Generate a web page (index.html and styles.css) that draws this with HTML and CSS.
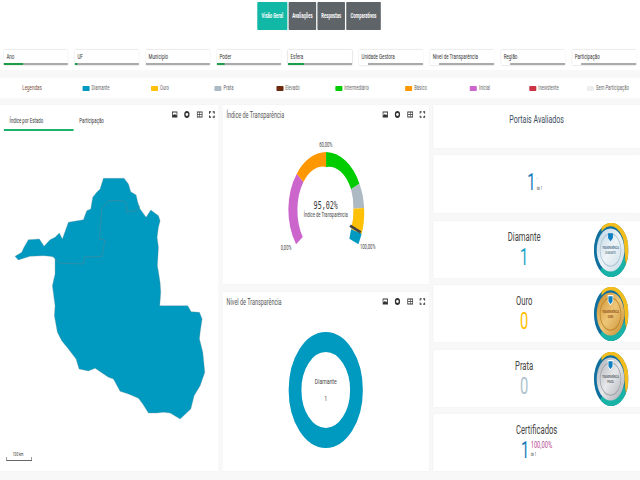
FILE: index.html
```html
<!DOCTYPE html>
<html lang="pt-BR">
<head>
<meta charset="utf-8">
<title>Visão Geral</title>
<link rel="stylesheet" href="styles.css">
</head>
<body>
<svg class="defs" width="0" height="0" aria-hidden="true">
  <defs>
    <linearGradient id="g-dia" x1="0" y1="0" x2="1" y2="1"><stop offset="0" stop-color="#b9d3e3"/><stop offset=".5" stop-color="#eef4f7"/><stop offset="1" stop-color="#c4d8e4"/></linearGradient>
    <linearGradient id="g-gold" x1="0" y1="0" x2="1" y2="1"><stop offset="0" stop-color="#c98a2a"/><stop offset=".5" stop-color="#eec678"/><stop offset="1" stop-color="#c58a30"/></linearGradient>
    <linearGradient id="g-silver" x1="0" y1="0" x2="1" y2="1"><stop offset="0" stop-color="#a9adb3"/><stop offset=".5" stop-color="#e6e8ea"/><stop offset="1" stop-color="#a5a9af"/></linearGradient>
  </defs>
  <symbol id="i-img" viewBox="0 0 24 24" preserveAspectRatio="none"><path d="M2 2h20v20H2z M5 5v10l5-5 3 3 2-2 4 4V5z" fill="#333" fill-rule="evenodd"/></symbol>
  <symbol id="i-gear" viewBox="0 0 24 24" preserveAspectRatio="none"><path d="M12 0c7 0 10 5 10 12s-3 12-10 12S2 19 2 12 5 0 12 0z M12 7a5 5 0 1 0 0 10 5 5 0 0 0 0-10z" fill="#333" fill-rule="evenodd"/></symbol>
  <symbol id="i-table" viewBox="0 0 24 24" preserveAspectRatio="none"><path d="M1 2h22v20H1z M4 5v5.500h7V5z M13 5v5.500h7V5z M4 13v6h7v-6z M13 13v6h7v-6z" fill="#333" fill-rule="evenodd"/></symbol>
  <symbol id="i-full" viewBox="0 0 24 24" preserveAspectRatio="none"><path d="M3 9V3h6 M15 3h6v6 M21 15v6h-6 M9 21H3v-6" fill="none" stroke="#333" stroke-width="3.500"/></symbol>
  <symbol id="medal-ring" viewBox="0 0 100 100">
    <circle cx="50" cy="50" r="50" fill="#0f6f9e"/>
    <path d="M22 8A50 50 0 0 1 100 50A50 50 0 0 1 92 78L88 50A40 40 0 0 0 22 16z" fill="#f2bd1d"/>
    <path d="M92 78A50 50 0 0 1 18 88L26 80A40 40 0 0 0 88 60z" fill="#19b2a6"/>
  </symbol>
</svg>
<div class="stage">
<div class="page">
  <nav class="nav">
    <a class="btn active">Visão Geral</a>
    <a class="btn">Avaliações</a>
    <a class="btn">Respostas</a>
    <a class="btn">Comparativos</a>
  </nav>

  <section class="filters">
    <div class="filter"><span>Ano</span><i class="bar"><b class="b30"></b></i></div>
    <div class="filter"><span>UF</span><i class="bar"><b class="b4"></b></i></div>
    <div class="filter"><span>Município</span><i class="bar"></i></div>
    <div class="filter"><span>Poder</span><i class="bar"><b class="b12"></b></i></div>
    <div class="filter"><span>Esfera</span><i class="bar"><b class="b25"></b></i></div>
    <div class="filter"><span>Unidade Gestora</span><i class="bar inset"></i></div>
    <div class="filter"><span>Nível de Transparência</span><i class="bar inset"></i></div>
    <div class="filter"><span>Região</span><i class="bar inset"></i></div>
    <div class="filter"><span>Participação</span><i class="bar inset"></i></div>
  </section>

  <section class="legend">
    <span class="leg-title">Legendas</span>
    <span class="leg"><i class="sw diamante"></i>Diamante</span>
    <span class="leg"><i class="sw ouro"></i>Ouro</span>
    <span class="leg"><i class="sw prata"></i>Prata</span>
    <span class="leg"><i class="sw elevado"></i>Elevado</span>
    <span class="leg"><i class="sw inter"></i>Intermediário</span>
    <span class="leg"><i class="sw basico"></i>Básico</span>
    <span class="leg"><i class="sw inicial"></i>Inicial</span>
    <span class="leg"><i class="sw inex"></i>Inexistente</span>
    <span class="leg"><i class="sw sem"></i>Sem Participação</span>
  </section>

  <main class="grid">
    <section class="card map-card">
      <div class="tabs-row">
        <div class="tab on">Índice por Estado</div>
        <div class="tab">Participação</div>
        <div class="tools">
          <svg><use href="#i-img"/></svg><svg><use href="#i-gear"/></svg><svg><use href="#i-table"/></svg><svg><use href="#i-full"/></svg>
        </div>
      </div>
      <svg class="map" viewBox="0 0 660 810" preserveAspectRatio="none">
        <path fill="#0099bf" stroke="#7f9aa3" stroke-width="1" d="M310 58L372 58 385 75 392 98 408 108 413 130 420 150 438 175 452 153 475 170 480 185 475 205 471 235 475 265 472 320 480 370 482 400 479 440 563 440 573 458 598 460 606 480 600 520 598 540 608 580 614 640 600 680 582 710 572 750 540 780 510 762 490 760 470 762 445 762 428 735 415 718 385 705 360 697 340 660 325 655 285 628 265 636 237 630 228 600 205 570 185 545 172 520 163 470 165 440 157 380 165 345 165 300 160 294 150 292 130 290 90 292 55 303 45 292 65 280 72 265 85 242 118 240 132 262 150 242 165 235 178 222 187 240 205 190 250 182 260 155 272 150 278 115 290 100 300 90Z"/>
        <path fill="none" stroke="#5f8794" stroke-width="1.500" d="M420 140L410 155 380 160 378 135 370 125 325 125 305 150 298 240 315 243 305 292 253 294 250 315 175 312 165 300"/>
      </svg>
      <div class="scale"><span>100 km</span></div>
    </section>

    <section class="card chart-card">
      <div class="head"><h3>Índice de Transparência</h3>
        <div class="tools"><svg><use href="#i-img"/></svg><svg><use href="#i-gear"/></svg><svg><use href="#i-table"/></svg><svg><use href="#i-full"/></svg></div>
      </div>
      <div class="gauge">
        <svg viewBox="148 130 340 330" preserveAspectRatio="none">
          <path fill="#cc66cc" d="M228 437A114 172 0 0 1 230 225L250 250A75 130 0 0 0 248 415Z"/>
          <path fill="#ff9800" d="M230 225A114 172 0 0 1 318 160L318 205A75 130 0 0 0 250 250Z"/>
          <path fill="#00cc00" d="M318 160A114 172 0 0 1 418 255L393 272A75 130 0 0 0 318 205Z"/>
          <path fill="#adb9c3" d="M418 255A114 172 0 0 1 432 328L400 330A75 130 0 0 0 393 272Z"/>
          <path fill="#ffc107" d="M432 328A114 172 0 0 1 425 405L393 392A75 130 0 0 0 400 330Z"/>
          <path fill="#0099bf" d="M425 405L415 437 388 420 393 392Z"/>
          <path stroke="#444" stroke-width="8" d="M390 381L422 401"/>
        </svg>
        <span class="g-label g60">60,00%</span>
        <span class="g-label g0">0,00%</span>
        <span class="g-label g100">100,00%</span>
        <div class="g-center"><strong>95,02%</strong><span>Índice de Transparência</span></div>
      </div>
    </section>

    <div class="side">
      <div class="card stat stat-title"><h2>Portais Avaliados</h2></div>
      <div class="card stat stat-count"><span class="num blue">1</span><span class="sub"><em>-</em><small>de 1</small></span></div>
      <div class="card stat medal-card">
        <h2>Diamante</h2><span class="num cyan">1</span>
        <svg class="medal" viewBox="0 0 100 100"><use href="#medal-ring" width="100" height="100"/><circle cx="48" cy="50" r="40" fill="url(#g-dia)"/><circle cx="48" cy="50" r="30" fill="none" stroke="#a9c0cf" stroke-width="2"/><path d="M41 19h14v9l-7 6-7-6z" fill="#0f7fc0"/><text x="48" y="48" class="m-text" fill="#4f6f8c">TRANSPARÊNCIA</text><text x="48" y="58" class="m-text" fill="#6d8497">DIAMANTE</text></svg>
      </div>
      <div class="card stat medal-card">
        <h2>Ouro</h2><span class="num gold">0</span>
        <svg class="medal" viewBox="0 0 100 100"><use href="#medal-ring" width="100" height="100"/><circle cx="48" cy="50" r="40" fill="url(#g-gold)"/><circle cx="48" cy="50" r="30" fill="none" stroke="#b98428" stroke-width="2"/><path d="M41 16h14v11l-7 6-7-6z" fill="#0f7fc0" stroke="#fff" stroke-width="2"/><text x="48" y="48" class="m-text" fill="#8f4d12">TRANSPARÊNCIA</text><text x="48" y="58" class="m-text" fill="#8f4d12">OURO</text></svg>
      </div>
      <div class="card stat medal-card">
        <h2>Prata</h2><span class="num silver">0</span>
        <svg class="medal" viewBox="0 0 100 100"><use href="#medal-ring" width="100" height="100"/><circle cx="48" cy="50" r="40" fill="url(#g-silver)"/><circle cx="48" cy="50" r="30" fill="none" stroke="#9da1a7" stroke-width="2"/><path d="M41 16h14v11l-7 6-7-6z" fill="#0f7fc0" stroke="#fff" stroke-width="2"/><text x="48" y="48" class="m-text" fill="#5c6168">TRANSPARÊNCIA</text><text x="48" y="58" class="m-text" fill="#5c6168">PRATA</text></svg>
      </div>
      <div class="card stat cert">
        <h2>Certificados</h2>
        <div class="cert-row"><span class="num blue">1</span><span class="sub"><b>100,00%</b><small>de 1</small></span></div>
      </div>
    </div>

    <section class="card chart-card second">
      <div class="head"><h3>Nível de Transparência</h3>
        <div class="tools"><svg><use href="#i-img"/></svg><svg><use href="#i-gear"/></svg><svg><use href="#i-table"/></svg><svg><use href="#i-full"/></svg></div>
      </div>
      <div class="donut"><span>Diamante</span><span>1</span></div>
    </section>
  </main>
</div>
</div>
</body>
</html>
```
FILE: styles.css
```css
* { box-sizing: border-box; }
html, body { margin: 0; width: 640px; height: 480px; overflow: hidden; background: #f8f8f8; }
.defs { display: block; height: 0; position: absolute; }
.stage { width: 640px; height: 480px; overflow: hidden; }
.page {
  width: 1000px; height: 480px;
  transform: scaleX(.64); transform-origin: 0 0;
  font-family: Roboto, "Liberation Sans", sans-serif;
  color: #444;
  display: flex; flex-direction: column;
}
.nav { height: 44px; background: #fff; display: flex; justify-content: center; gap: 2px; padding: 2px 3px 0 0; align-items: flex-start; }
.btn { height: 28px; display: flex; align-items: center; background: #5f6468; color: #fff; font-size: 6.5px; font-weight: 700; border-radius: 1px; width: 43px; justify-content: center; white-space: nowrap; }
.btn.active { background: #12b8a6; width: 47px; }
.btn:last-child { width: 54px; }
.filters { height: 26px; background: #fff; display: flex; gap: 11px; padding: 6px 6px 0; margin-bottom: 8px; }
.filter { flex: 1 1 0; min-width: 0; height: 15px; background: #fff; box-shadow: 0 0 2px rgba(0,0,0,.3); font-size: 7px; padding: 3px 4px 0; color: #333; white-space: nowrap; display: flex; flex-direction: column; justify-content: space-between; }
.bar { display: block; height: 2px; background: #aaa; margin: 0 -4px; }
.bar.inset { margin-left: 10px; }
.bar b { display: block; height: 2px; background: #1c9d4a; }
.b30 { width: 30%; } .b4 { width: 4%; } .b12 { width: 12%; } .b25 { width: 25%; }
.legend { height: 20px; background: #fff; display: grid; grid-template-columns: repeat(10, 1fr); align-items: center; justify-items: center; font-size: 6.5px; color: #666; margin-bottom: 7px; }
.leg-title { color: #7a4a3a; font-size: 7px; }
.leg { display: flex; align-items: center; gap: 3px; white-space: nowrap; }
.sw { width: 11px; height: 5px; border-radius: 1px; display: block; }
.diamante { background: #0099bf; } .ouro { background: #ffc107; } .prata { background: #adb9c3; } .elevado { background: #6b2a0e; }
.inter { background: #00cc00; } .basico { background: #ff9800; } .inicial { background: #cc66cc; } .inex { background: #cc3344; } .sem { background: #eee; }
.grid { display: grid; grid-template-columns: 341px 322px 323px; grid-template-rows: 179px 179px; column-gap: 7px; row-gap: 8px; }
.card { background: #fff; box-shadow: 0 0 2px rgba(0,0,0,.05); }
.map-card { grid-row: 1 / 3; position: relative; overflow: hidden; }
.tabs-row { display: flex; height: 26px; position: relative; padding: 0 6px; }
.tab { width: 109px; font-size: 6.8px; padding: 12px 0 0 9px; color: #333; white-space: nowrap; height: 26px; }
.tab.on { border-bottom: 2px solid #1db26b; }
.tools { position: absolute; right: 5px; top: 6px; display: flex; gap: 9.5px; }
.tools svg { width: 10px; height: 7px; display: block; }
.map { display: block; width: 344px; height: 270px; margin-top: 28px; }
.scale { position: absolute; left: 10px; bottom: 10px; width: 40px; height: 4px; border: 1px solid #666; border-top: 0; font-size: 5px; }
.scale span { position: absolute; left: 9px; top: -6px; white-space: nowrap; color: #333; }
.chart-card { position: relative; }
.head { height: 20px; padding: 5px 6px; position: relative; }
.head h3 { margin: 0; font-size: 8.5px; font-weight: 400; color: #555; white-space: nowrap; }
.gauge { position: relative; width: 177px; height: 110px; margin: 17px auto 0; }
.gauge svg { display: block; width: 100%; height: 100%; }
.g-label { position: absolute; font-size: 6.5px; color: #444; white-space: nowrap; transform: translate(-50%, -50%); }
.g60 { left: 50%; top: 2.4%; }
.g0 { left: 15%; top: 96%; }
.g100 { left: 87%; top: 95%; }
.g-center { position: absolute; left: 50%; top: 52%; transform: translateX(-50%); text-align: center; white-space: nowrap; }
.g-center strong { display: block; font-family: "DejaVu Sans Mono", monospace; font-weight: 400; font-size: 10.5px; color: #333; line-height: 12px; }
.g-center span { display: block; font-size: 6.5px; color: #444; line-height: 8px; }
.second { grid-column: 2; grid-row: 2; }
.donut { width: 116px; height: 116px; border: 20px solid #0099bf; border-radius: 50%; margin: 20px auto 0; display: flex; flex-direction: column; align-items: center; justify-content: center; gap: 8px; font-size: 8px; color: #444; }
.side { grid-column: 3; grid-row: 1 / 3; display: flex; flex-direction: column; gap: 7.5px; }
.stat { position: relative; display: flex; flex-direction: column; align-items: center; }
.stat h2 { margin: 0; font-size: 12px; font-weight: 400; color: #444; line-height: 14px; }
.stat-title { height: 43px; padding-top: 8px; }
.stat-title h2 { color: #3d4d5c; font-size: 11px; }
.stat-count { height: 58px; flex-direction: row; justify-content: center; padding: 16px 6px 0 0; align-items: flex-start; }
.num { font-size: 23px; font-weight: 400; line-height: 24px; }
.blue { color: #1a7db8; } .cyan { color: #1ba3c6; } .gold { color: #ffc107; } .silver { color: #adc3d0; }
.sub { display: flex; flex-direction: column; padding-left: 2px; white-space: nowrap; }
.sub em { font-size: 5px; font-style: normal; line-height: 14px; }
.sub small { font-size: 4.5px; color: #555; line-height: 7px; }
.sub b { font-size: 9px; font-weight: 400; color: #b5478f; line-height: 12px; }
.medal-card { height: 57px; padding: 9px 39px 0 0; }
.medal-card .num { margin-top: 2px; }
.medal { position: absolute; right: 17px; top: 2px; width: 56px; height: 54px; }
.m-text { font-size: 6px; font-weight: 700; text-anchor: middle; }
.cert { height: 57px; padding-top: 9px; }
.cert-row { display: flex; margin-top: 2px; align-items: flex-start; }
```
